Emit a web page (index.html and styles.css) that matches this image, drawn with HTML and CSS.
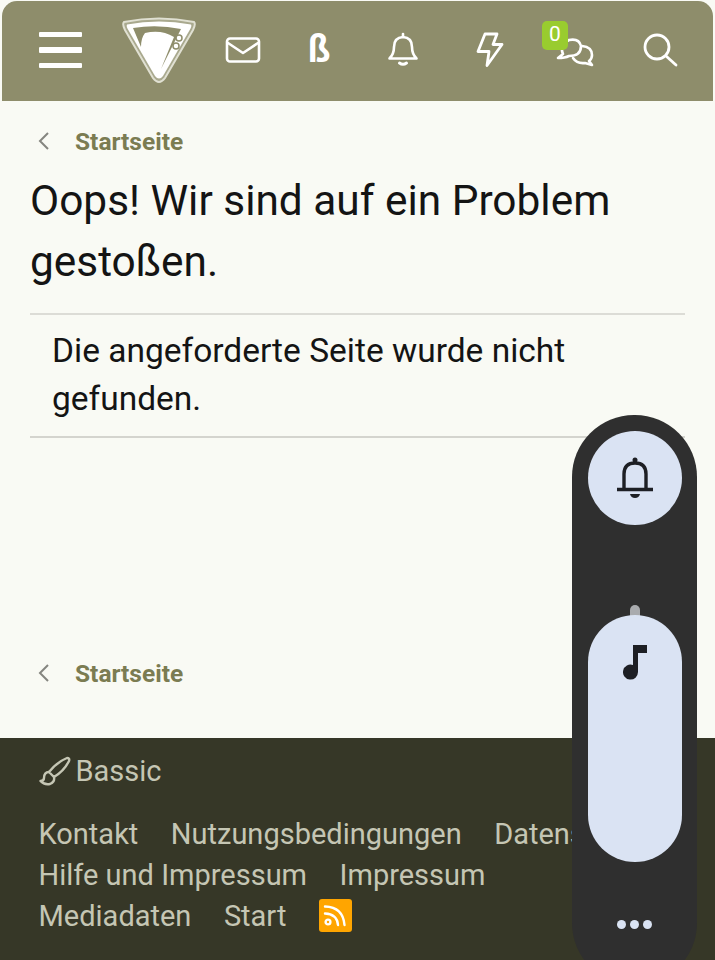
FILE: index.html
```html
<!DOCTYPE html>
<html lang="de">
<head>
    <meta charset="UTF-8">
    <meta name="viewport" content="width=device-width, initial-scale=1.0">
    <title>Oops! Wir sind auf ein Problem gestoßen.</title>
    <link rel="stylesheet" href="styles.css">
</head>
<body>
    <header class="topbar">
        <a class="burger" href="#"><span></span><span></span><span></span></a>
        <a class="logo" href="#">
            <svg width="76" height="68" viewBox="0 0 76 68">
                <path d="M3 6 Q38 -1 73 6 Q75 8 72 14 L44 62 Q38 70 32 62 L4 14 Q1 8 3 6Z" fill="#a9a98e" stroke="#e0e0d2" stroke-width="2"/>
                <path d="M6 8.500 Q38 2.500 70 8.500 Q71 10 69 13.500 L42 60 Q38 65 34 60 L7 13.500 Q5 10 6 8.500Z" fill="#fff"/>
                <path d="M12 12 Q36 8 60 13 L40 53 L53 21 Q40 13 24 17 Q20 22 20 31Z" fill="#8e8d6b"/>
                <circle cx="58" cy="22" r="3" fill="#fff" stroke="#8e8d6b" stroke-width="1.500"/>
                <circle cx="55" cy="30" r="3" fill="#fff" stroke="#8e8d6b" stroke-width="1.500"/>
            </svg>
        </a>
        <a class="tool tool-mail" href="#">
            <svg width="36" height="28" viewBox="0 0 36 28" fill="none" stroke="#fff" stroke-width="2.6" stroke-linejoin="round" stroke-linecap="round">
                <rect x="2" y="2.5" width="32" height="23" rx="3"/>
                <path d="M3 7 L18 17 L33 7"/>
            </svg>
        </a>
        <a class="tool tool-beta" href="#">ß</a>
        <a class="tool tool-bell" href="#">
            <svg width="32" height="36" viewBox="0 0 32 36" fill="none" stroke="#fff" stroke-width="2.6" stroke-linejoin="round" stroke-linecap="round">
                <path d="M2.5 26.5 Q7 22 7 15 Q7 5.5 16 5 Q25 5.5 25 15 Q25 22 29.5 26.5Z"/>
                <path d="M16 2 V4"/>
                <path d="M12.5 31 Q16 33.5 19.5 31" stroke-width="3"/>
            </svg>
        </a>
        <a class="tool tool-bolt" href="#">
            <svg width="28" height="36" viewBox="0 0 28 36" fill="none" stroke="#fff" stroke-width="2.8" stroke-linejoin="round">
                <path d="M9 2 H21 L17 12.5 H26 L11 33.500 L13 19.500 H2Z"/>
            </svg>
        </a>
        <a class="tool tool-chat" href="#">
            <svg width="40" height="30" viewBox="0 0 40 30" fill="none" stroke="#fff" stroke-width="2.6" stroke-linejoin="round" stroke-linecap="round">
                <path d="M3 21 L8 17 Q4 8 14 3 Q24 1 26 9 Q26 19 14 19 Q10 21 3 21Z"/>
                <path d="M27 9 Q37 10 37 18 Q37 22 34 24 L37 28 L30 26 Q22 27 18 21"/>
            </svg>
            <span class="badge">0</span>
        </a>
        <a class="tool tool-search" href="#">
            <svg width="36" height="36" viewBox="0 0 36 36" fill="none" stroke="#fff" stroke-width="2.8" stroke-linecap="round">
                <circle cx="15" cy="15" r="12"/>
                <path d="M24 24 L34 33"/>
            </svg>
        </a>
    </header>

    <main class="content">
        <a class="crumb" href="#">
            <svg width="14" height="20" viewBox="0 0 14 20" fill="none" stroke="#85857f" stroke-width="2"><path d="M11 2 L3 10 L11 18"/></svg>
            <span>Startseite</span>
        </a>
        <h1>Oops! Wir sind auf ein Problem gestoßen.</h1>
        <div class="message">Die angeforderte Seite wurde nicht gefunden.</div>
        <a class="crumb crumb-bottom" href="#">
            <svg width="14" height="20" viewBox="0 0 14 20" fill="none" stroke="#85857f" stroke-width="2"><path d="M11 2 L3 10 L11 18"/></svg>
            <span>Startseite</span>
        </a>
    </main>

    <footer class="footer">
        <a class="style-link" href="#">
            <svg width="32" height="30" viewBox="0 0 32 30" fill="none" stroke="#c5c6b4" stroke-width="2.4" stroke-linejoin="round">
                <path d="M28 2 Q31 2 30 5 Q25 15 15 21 L10 16 Q18 6 28 2Z"/>
                <path d="M10 16 Q5 16 5 22 Q5 25 1.5 25 Q5 29 11 28 Q16 26 15 21"/>
            </svg>
            Bassic
        </a>
        <nav class="footer-links">
            <a href="#">Kontakt</a>
            <a href="#">Nutzungsbedingungen</a>
            <a href="#">Datenschutz</a>
            <a href="#">Hilfe und Impressum</a>
            <a href="#">Impressum</a>
            <a href="#">Mediadaten</a>
            <a href="#">Start</a>
            <a class="rss" href="#">
                <svg width="24" height="24" viewBox="0 0 24 24" fill="none" stroke="#fff" stroke-width="2.4" stroke-linecap="round">
                    <path d="M2 2.5 Q20 3 21.5 21"/>
                    <path d="M2 9.5 Q14 10 15 21"/>
                    <circle cx="5" cy="18" r="2.4"/>
                </svg>
            </a>
        </nav>
    </footer>

    <!-- Lautstaerke-Overlay -->
    <aside class="volume">
        <div class="volume-bell">
            <svg width="38" height="44" viewBox="0 0 38 44" fill="none" stroke="#1d1f24" stroke-width="3.4">
                <path d="M8 33 V18 Q8 7 19 7 Q30 7 30 18 V33"/>
                <path d="M1 33.5 H37"/>
                <circle cx="19" cy="4" r="2.5" fill="#1d1f24" stroke="none"/>
                <path d="M14 38 H24 Q23 42 19 42 Q15 42 14 38Z" fill="#1d1f24" stroke="none"/>
            </svg>
        </div>
        <div class="volume-track">
            <div class="volume-handle"></div>
            <div class="volume-fill">
                <svg width="24" height="36" viewBox="0 0 24 36">
                    <path d="M10 0 H24 V8 H15 V27 A7.5 7.5 0 1 1 10 20Z" fill="#1d1f24"/>
                </svg>
            </div>
        </div>
        <div class="volume-more"><span></span><span></span><span></span></div>
    </aside>
</body>
</html>
```

FILE: styles.css
```css
html, body {
    height: 960px;
    overflow: hidden;
}
body {
    margin: 0;
    font-family: Roboto, "Liberation Sans", sans-serif;
    background-color: #f9faf4;
    color: #141414;
    display: flex;
    flex-direction: column;
    position: relative;
}
a {
    color: inherit;
    text-decoration: none;
}

/* header */
.topbar {
    height: 100px;
    margin: 1px 2px 0;
    background-color: #8e8d6b;
    border-radius: 15px 15px 0 0;
    display: flex;
    align-items: center;
    color: #fff;
    flex-shrink: 0;
}
.burger {
    width: 43px;
    margin-left: 37px;
    display: flex;
    flex-direction: column;
    gap: 10px;
    margin-top: -2px;
}
.burger span {
    height: 5.5px;
    border-radius: 1px;
    background-color: #fff;
}
.logo {
    margin-left: 39px;
    display: flex;
    margin-top: -2px;
}
.tool {
    position: relative;
    display: flex;
    justify-content: center;
    align-items: center;
    margin-top: -3px;
}
.tool-mail {
    margin-left: 28px;
}
.tool-beta {
    margin-left: 48px;
    font-size: 36px;
    font-weight: 700;
    width: 20px;
}
.tool-bell {
    margin-left: 58px;
}
.tool-bolt {
    margin-left: 57px;
}
.tool-chat {
    margin-left: 51px;
    margin-top: 2px;
}
.tool-search {
    margin-left: 47px;
}
.badge {
    position: absolute;
    left: -13px;
    top: -16px;
    width: 26px;
    height: 29px;
    border-radius: 5px;
    background-color: #99cc2f;
    color: #fff;
    font-size: 21px;
    line-height: 27px;
    text-align: center;
}

/* content */
.content {
    flex: 1;
    padding: 0 30px;
    display: flex;
    flex-direction: column;
}
.crumb {
    display: flex;
    align-items: center;
    height: 40px;
    margin-top: 20px;
    padding-left: 7px;
    color: #7b7c52;
    font-size: 24.5px;
    font-weight: 700;
    flex-shrink: 0;
}
.crumb span {
    margin-left: 24px;
}
.crumb-bottom {
    margin-top: auto;
    margin-bottom: 45px;
}
h1 {
    margin: 10px 0 0;
    font-size: 42.4px;
    font-weight: 400;
    line-height: 60.5px;
    padding-bottom: 21px;
    border-bottom: 2px solid #dcdcd6;
}
.message {
    padding: 12px 100px 13px 22px;
    font-size: 33.5px;
    line-height: 48px;
    border-bottom: 2px solid #d4d4ce;
}

/* footer */
.footer {
    height: 222px;
    box-sizing: border-box;
    background-color: #363727;
    color: #c5c6b4;
    padding: 14px 55px 0 38.5px;
    font-size: 29px;
    flex-shrink: 0;
}
.style-link {
    display: flex;
    align-items: center;
    gap: 5px;
    height: 38px;
}
.footer-links {
    display: flex;
    flex-wrap: wrap;
    column-gap: 32.5px;
    margin-top: 24px;
    line-height: 41px;
}
.rss {
    width: 33px;
    height: 33px;
    margin: 3px 0 0 0;
    border-radius: 3px;
    background-color: #ffa500;
    display: flex;
    align-items: center;
    justify-content: center;
}

/* overlay */
.volume {
    position: absolute;
    left: 571.5px;
    top: 415px;
    width: 125.5px;
    height: 570px;
    box-sizing: border-box;
    padding: 16px 15px 0 16px;
    border-radius: 62px;
    background-color: #2f2f2f;
    display: flex;
    flex-direction: column;
    align-items: center;
}
.volume-bell {
    width: 94px;
    height: 94px;
    border-radius: 50%;
    background-color: #dae3f3;
    display: flex;
    align-items: center;
    justify-content: center;
    flex-shrink: 0;
}
.volume-track {
    position: relative;
    margin-top: 90px;
    width: 94px;
    height: 247px;
    flex-shrink: 0;
}
.volume-handle {
    position: absolute;
    left: 42px;
    top: -10px;
    width: 10px;
    height: 20px;
    border-radius: 5px 5px 0 0;
    background-color: #a9abae;
}
.volume-fill {
    position: relative;
    height: 100%;
    border-radius: 47px;
    background-color: #dae3f3;
    display: flex;
    justify-content: center;
    padding-top: 30px;
    box-sizing: border-box;
}
.volume-more {
    margin-top: 58px;
    display: flex;
    gap: 4px;
}
.volume-more span {
    width: 9px;
    height: 9px;
    border-radius: 50%;
    background-color: #dae3f3;
}
```
